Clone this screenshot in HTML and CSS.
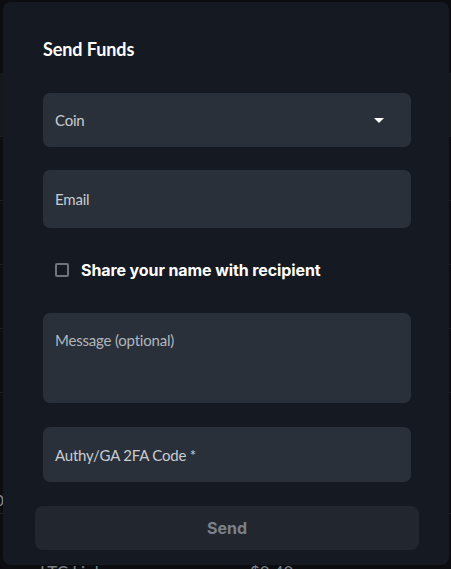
FILE: index.html
```html
<!DOCTYPE html>
<html>
<head>
<meta charset="utf-8">
<link rel="stylesheet" href="styles.css">
</head>
<body>
<div class="page">
  <div class="backdrop">
    <div class="bg-row bg-row-top"></div>
    <div class="bg-row"></div>
    <div class="bg-row"></div>
    <div class="bg-row"></div>
    <div class="bg-row"></div>
    <div class="bg-row bg-last"><span class="bg-num">0</span></div>
    <div class="bg-foot"><span class="bg-name">LTC Link</span><span class="bg-price">$0.40</span></div>
  </div>
  <div class="modal">
    <h2 class="title">Send Funds</h2>
    <div class="field field-coin">
      <span class="label">Coin</span>
      <svg class="arrow" width="10" height="5" viewBox="0 0 10 5"><path d="M0 0H10L5 5Z" fill="#ffffff"/></svg>
    </div>
    <div class="field field-email"><span class="label">Email</span></div>
    <label class="check-row">
      <span class="checkbox"></span>
      <span class="check-label">Share your name with recipient</span>
    </label>
    <div class="field field-message"><span class="label label-dim">Message (optional)</span></div>
    <div class="field field-code"><span class="label">Authy/GA 2FA Code *</span></div>
    <button class="send">Send</button>
  </div>
</div>
</body>
</html>
```
FILE: styles.css
```css
html, body {
  margin: 0;
  padding: 0;
}
body {
  background: #0b0d11;
  width: 451px;
  height: 569px;
  overflow: hidden;
}
.page {
  position: relative;
  width: 451px;
  height: 569px;
}
.backdrop {
  display: flex;
  flex-direction: column;
  padding-top: 73px;
}
.bg-row {
  height: 63px;
  border-bottom: 1px solid #1a1e25;
}
.bg-row-top {
  background: #15181d;
}
.bg-last {
  height: 120px;
}
.bg-num {
  font-family: "Lato", sans-serif;
  font-size: 15px;
  color: #8a8f96;
  margin-left: -5px;
  line-height: 20px;
  display: block;
  padding-top: 97px;
}
.bg-foot {
  display: flex;
  padding-left: 40px;
  padding-top: 49px;
  font-family: "Lato", sans-serif;
  font-size: 17px;
  line-height: 20px;
  color: #7d8188;
}
.bg-name {
  width: 210px;
}
.modal {
  position: absolute;
  left: 3px;
  top: 2px;
  width: 446px;
  height: 563px;
  background: #151a22;
  border-radius: 8px;
  display: flex;
  flex-direction: column;
  box-sizing: border-box;
  padding-top: 37px;
}
.title {
  margin: 0 0 0 40px;
  font-family: "Lato", sans-serif;
  font-weight: 700;
  font-size: 18px;
  line-height: 20px;
  color: #ffffff;
  letter-spacing: -0.1px;
}
.field {
  margin-left: 40px;
  width: 368px;
  box-sizing: border-box;
  background: #29303a;
  border-radius: 7px;
  display: flex;
  align-items: center;
  padding-left: 12px;
  font-family: "Lato", sans-serif;
  font-size: 15px;
  letter-spacing: -0.2px;
  color: #c9ccd1;
}
.label {
  line-height: 18px;
}
.label-dim {
  color: #b2b6bc;
}
.field-coin {
  margin-top: 34px;
  height: 54px;
  justify-content: space-between;
  padding-right: 27px;
}
.arrow {
  display: block;
}
.field-email {
  margin-top: 23px;
  height: 58px;
}
.check-row {
  margin: 32px 0 0 52px;
  height: 20px;
  display: flex;
  align-items: center;
  gap: 12px;
}
.checkbox {
  width: 14px;
  height: 14px;
  box-sizing: border-box;
  border: 2px solid #6f747d;
  border-radius: 2px;
}
.check-label {
  font-family: "Inter", sans-serif;
  font-weight: 700;
  font-size: 16px;
  color: #ffffff;
  letter-spacing: -0.1px;
}
.field-message {
  margin-top: 33px;
  height: 90px;
  align-items: flex-start;
  padding-top: 18px;
}
.field-code {
  margin-top: 24px;
  height: 55px;
}
.send {
  margin: 24px 0 0 32px;
  width: 384px;
  height: 44px;
  border: none;
  border-radius: 8px;
  background: #22272f;
  color: #7b8089;
  font-family: "Inter", sans-serif;
  font-weight: 700;
  font-size: 16px;
  padding: 0;
}
```
